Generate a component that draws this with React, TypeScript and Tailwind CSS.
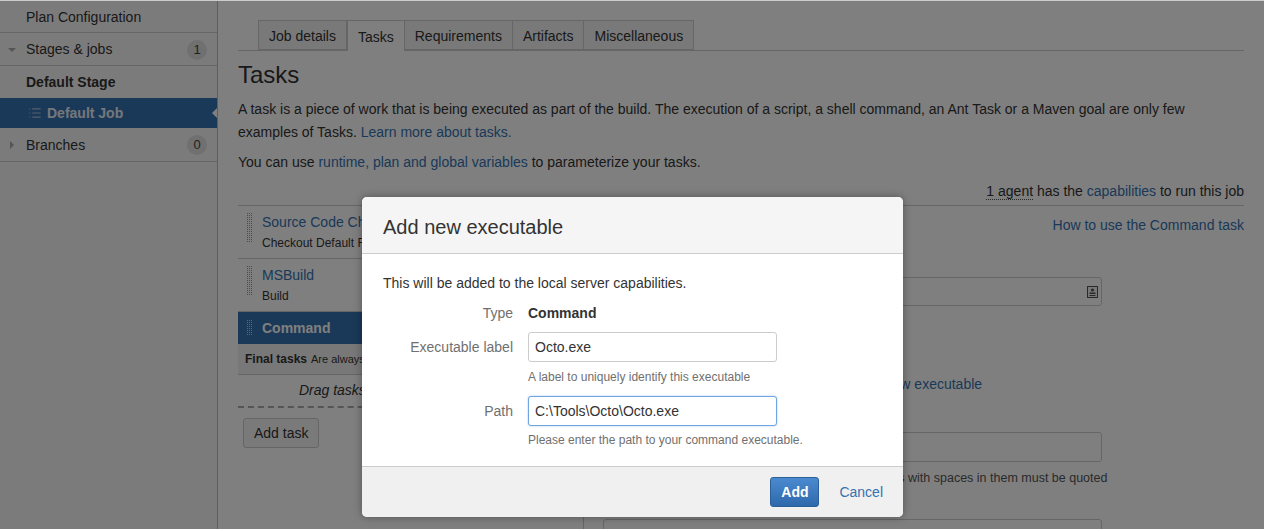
import React from "react";
import { List } from "lucide-react";

const link = "text-[#3572b0]";

function Handle({ h = 28, light = false }: { h?: number; light?: boolean }) {
  const id = light ? "dots-light" : "dots-dark";
  return (
    <svg width="6" height={h} className="shrink-0">
      <defs>
        <pattern id={id} width="2" height="2" patternUnits="userSpaceOnUse">
          <rect width="1" height="1" fill={light ? "#b8cde6" : "#999"} />
        </pattern>
      </defs>
      <rect width="6" height={h} fill={`url(#${id})`} />
    </svg>
  );
}

function Badge({ n }: { n: string }) {
  return (
    <span className="ml-auto mr-[10px] flex h-[20px] w-[20px] items-center justify-center rounded-full bg-[#e0e0e0] text-[13px] text-[#444]">
      {n}
    </span>
  );
}

function Sidebar() {
  return (
    <aside className="w-[218px] shrink-0 border-r border-[#bbbbbb] bg-[#f7f7f7]">
      <div className="flex h-[32px] items-center border-b border-[#cccccc] pl-[26px] pt-[1px]">Plan Configuration</div>
      <div className="flex h-[33px] items-center border-b border-[#cccccc] pt-[1px]">
        <svg width="26" height="10" className="shrink-0">
          <path d="M8 3 L16 3 L12 7 Z" fill="#aaaaaa" />
        </svg>
        <span>Stages &amp; jobs</span>
        <Badge n="1" />
      </div>
      <div className="flex h-[32px] items-center pl-[26px] font-bold">Default Stage</div>
      <div className="relative flex h-[30px] items-center bg-[#3572b0] pl-[28px] font-bold text-white">
        <List size={14} strokeWidth={2} className="mr-[5px] text-[#a9c0dc]" />
        <span className="text-[#e8eef6]">Default Job</span>
        <span className="absolute right-0 top-[10px] h-0 w-0 border-y-[5px] border-r-[5px] border-y-transparent border-r-white" />
      </div>
      <div className="flex h-[34px] items-center border-b border-[#cccccc] pt-[1px]">
        <svg width="26" height="12" className="shrink-0">
          <path d="M10 2 L14 6 L10 10 Z" fill="#aaaaaa" />
        </svg>
        <span>Branches</span>
        <Badge n="0" />
      </div>
    </aside>
  );
}

function Tabs() {
  const tabs = ["Job details", "Tasks", "Requirements", "Artifacts", "Miscellaneous"];
  return (
    <div className="mt-[19px] flex h-[31px] border-b border-[#cccccc] pl-[20px]">
      {tabs.map((t) => (
        <div
          key={t}
          className={
            t === "Tasks"
              ? "-mb-px flex h-[31px] items-center border border-b-0 border-[#cccccc] bg-white px-[10px] pt-[2px]"
              : "-ml-px flex h-[30px] items-center border border-[#cccccc] bg-[#f2f2f2] px-[10px] pt-[2px] first:ml-0"
          }
        >
          {t}
        </div>
      ))}
    </div>
  );
}

function TaskList() {
  return (
    <div className="w-[345px] shrink-0">
      <div className="flex h-[53px] items-start gap-[9px] border-b border-[#cccccc] pl-[9px] pt-[7px]">
        <Handle h={30} />
        <div>
          <div className={`${link} leading-[18px]`}>Source Code Checkout</div>
          <div className="mt-[4px] text-[12px] leading-[16px]">Checkout Default Repository</div>
        </div>
      </div>
      <div className="flex h-[53px] items-start gap-[9px] border-b border-[#cccccc] pl-[9px] pt-[7px]">
        <Handle h={30} />
        <div>
          <div className={`${link} leading-[18px]`}>MSBuild</div>
          <div className="mt-[4px] text-[12px] leading-[16px]">Build</div>
        </div>
      </div>
      <div className="flex h-[32px] items-center gap-[9px] bg-[#3572b0] pl-[9px] font-bold text-white">
        <Handle h={16} light />
        <span>Command</span>
      </div>
      <div className="flex h-[31px] items-center gap-[4px] border-b border-[#cccccc] bg-[#f0f0f0] pl-[7px] text-[12px]">
        <span className="font-bold">Final tasks</span>
        <span className="text-[11px]">Are always executed even if a previous task fails</span>
      </div>
      <div className="flex h-[33px] items-center justify-center border-b-2 border-dashed border-[#aaaaaa] pr-[6px] italic">
        Drag tasks here to make them final
      </div>
      <button className="ml-[5px] mt-[10px] h-[30px] rounded-[3px] border border-[#cccccc] bg-[#f5f5f5] px-[10px] text-[14px] text-[#333]">
        Add task
      </button>
    </div>
  );
}

function TaskDetails() {
  return (
    <div className="flex-1 border-l border-[#cccccc] pl-[19px]">
      <div className="mt-[10px] text-right leading-[18px]">
        <span className={link}>How to use the Command task</span>
      </div>
      <div className="mt-[20px] text-[13px] leading-[16px]">Task description</div>
      <div className="mt-[7px] flex h-[29px] w-[499px] items-center justify-end rounded-[3px] border border-[#cccccc] bg-white pr-[3px]">
        <svg width="11" height="12" viewBox="0 0 11 12">
          <rect x="0.5" y="0.5" width="10" height="11" fill="#eee" stroke="#555" />
          <circle cx="5.5" cy="4" r="1.6" fill="#555" />
          <rect x="2.5" y="6.5" width="6" height="1.5" fill="#555" />
          <rect x="2.5" y="9" width="6" height="1" fill="#555" />
        </svg>
      </div>
      <div className="mt-[22px] flex items-center gap-[6px] text-[13px]">
        <span className="h-[13px] w-[13px] border border-[#999]" />
        Disable this task
      </div>
      <div className="mt-[23px] flex items-center gap-[10px]">
        <div className="h-[28px] w-[243px] rounded-[3px] border border-[#cccccc] bg-white" />
        <span className={link}>Add new executable</span>
      </div>
      <div className="mt-[13px] text-[13px] leading-[16px]">Argument</div>
      <div className="mt-[4px] h-[30px] w-[499px] rounded-[3px] border border-[#cccccc] bg-white" />
      <div className="mt-[8px] text-[12.5px] leading-[16px] text-[#555]">
        Argument will be passed to the executable. Arguments with spaces in them must be quoted
      </div>
      <div className="mt-[13px] text-[13px] leading-[16px]">Environment variables</div>
      <div className="mt-[4px] h-[30px] w-[499px] rounded-[3px] border border-[#cccccc] bg-white" />
    </div>
  );
}

function Modal() {
  return (
    <div className="absolute left-[362px] top-[196px] w-[541px] overflow-hidden rounded-[5px] bg-white shadow-[0_0_8px_rgba(0,0,0,0.35)]">
      <div className="flex h-[57px] items-center border-b border-[#cccccc] bg-[#f5f5f5] px-[21px] pt-[4px] text-[20px] text-[#333]">
        Add new executable
      </div>
      <div className="px-[21px] pb-[18px] pt-[20px]">
        <div className="leading-[18px]">This will be added to the local server capabilities.</div>
        <div className="mt-[12px] flex items-center leading-[18px]">
          <span className="w-[130px] text-right text-[#707070]">Type</span>
          <span className="ml-[15px] font-bold">Command</span>
        </div>
        <div className="mt-[10px] flex items-center">
          <span className="w-[130px] text-right text-[#707070]">Executable label</span>
          <div className="ml-[15px] flex h-[30px] w-[249px] items-center rounded-[3px] border border-[#cccccc] bg-white px-[6px]">
            Octo.exe
          </div>
        </div>
        <div className="ml-[145px] mt-[7px] text-[12px] leading-[16px] text-[#707070]">
          A label to uniquely identify this executable
        </div>
        <div className="mt-[11px] flex items-center">
          <span className="w-[130px] text-right text-[#707070]">Path</span>
          <div className="ml-[15px] flex h-[30px] w-[249px] items-center rounded-[3px] border border-[#6fa5e0] bg-white px-[6px] shadow-[0_0_2px_rgba(80,140,220,0.5)]">
            C:\Tools\Octo\Octo.exe
          </div>
        </div>
        <div className="ml-[145px] mt-[6px] text-[12px] leading-[16px] text-[#707070]">
          Please enter the path to your command executable.
        </div>
      </div>
      <div className="flex h-[51px] items-center justify-end gap-[20px] border-t border-[#cccccc] bg-[#f0f0f0] pr-[20px]">
        <button className="h-[30px] w-[49px] rounded-[3px] border border-[#2a5f98] bg-gradient-to-b from-[#4b8ad0] to-[#2f69ac] text-[14px] font-bold text-white">
          Add
        </button>
        <span className={link}>Cancel</span>
      </div>
    </div>
  );
}

export default function App() {
  return (
    <div className="relative flex h-[529px] overflow-hidden border-t border-[#cccccc] bg-white font-['Liberation_Sans',Arial,sans-serif] text-[14px] text-[#333]">
      <Sidebar />
      <main className="min-w-0 flex-1 px-[20px]">
        <Tabs />
        <h1 className="mt-[10px] text-[24px] leading-[28px]">Tasks</h1>
        <p className="mt-[9px] leading-[23px]">
          A task is a piece of work that is being executed as part of the build. The execution of a script, a shell
          command, an Ant Task or a Maven goal are only few examples of Tasks.{" "}
          <span className={link}>Learn more about tasks.</span>
        </p>
        <p className="mt-[7px] leading-[23px]">
          You can use <span className={link}>runtime, plan and global variables</span> to parameterize your tasks.
        </p>
        <div className="mt-[8px] h-[24px] border-b border-[#cccccc] text-right leading-[18px]">
          <span className="border-b border-dotted border-[#555]">1 agent</span> has the{" "}
          <span className={link}>capabilities</span> to run this job
        </div>
        <div className="flex">
          <TaskList />
          <TaskDetails />
        </div>
      </main>
      <div className="absolute inset-0 bg-black/50" />
      <Modal />
    </div>
  );
}
